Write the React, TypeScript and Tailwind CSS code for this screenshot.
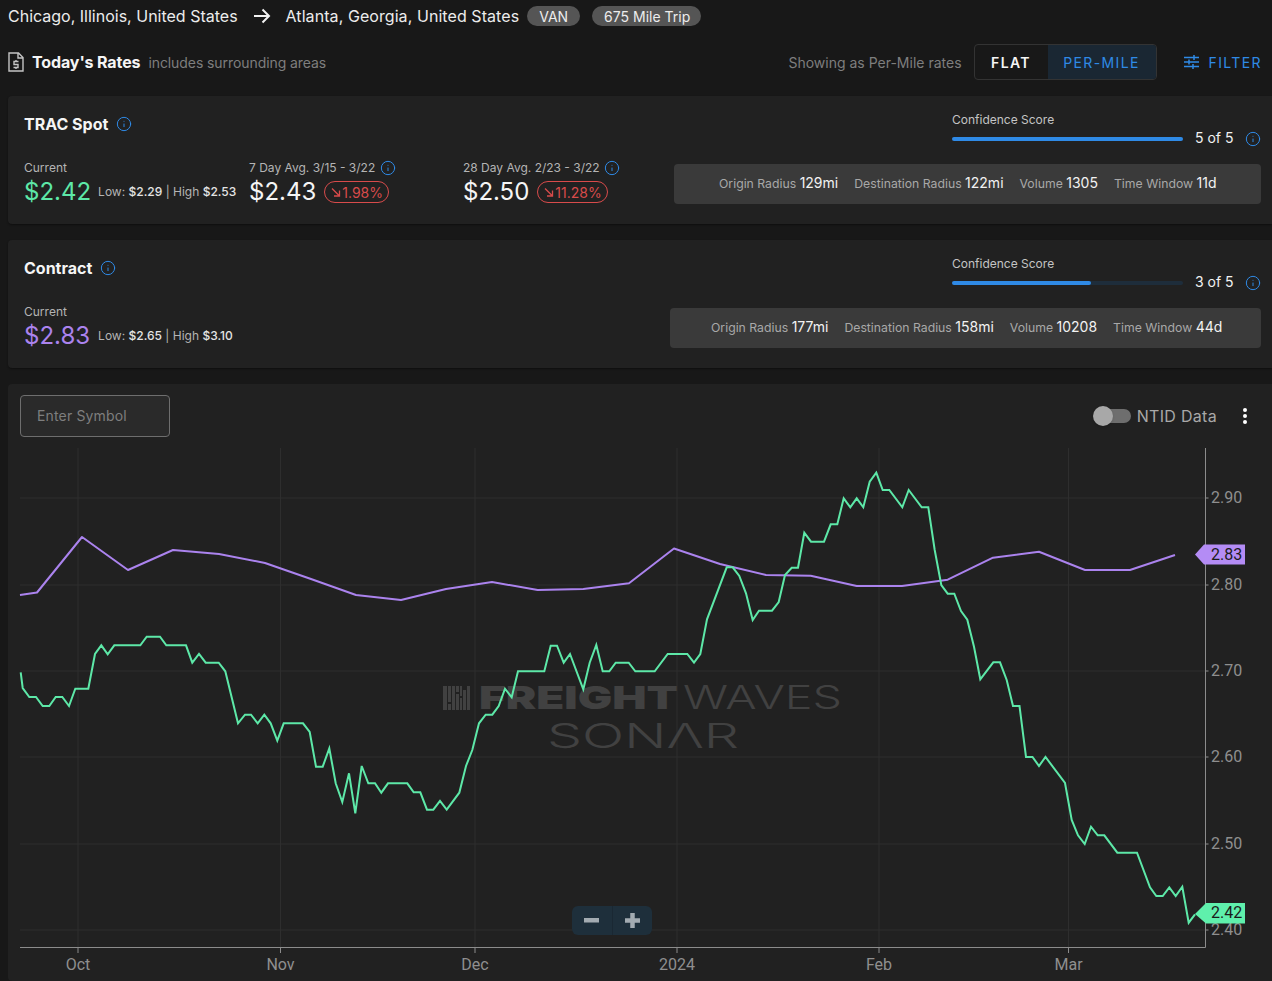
import { Info } from "lucide-react";

const green =
  "20.7,672.3 22.7,688 29.3,697 36,697 42.7,706 49.3,706 55.7,697 62.3,697 69,706 75.3,688.7 88.3,688.7 95,654 101.3,645.3 107.7,654.3 114.3,645.3 140.3,645.3 146.7,636.7 160,636.7 166.3,645.3 186,645.3 192.3,662.7 199,654 205.7,662.7 218.7,662.7 225.3,671.3 238,723.3 245,714.7 251,714.7 257.7,723.3 264.3,714.7 270.7,723.3 277.3,740.7 283.7,723.3 303,723.3 309.7,732 316,766.7 322.7,766.7 329.3,748.3 335.7,783.3 342.3,802 349,773.3 355.3,813.3 361.7,766 368.3,783.3 375,783.3 381.3,792.7 388,783.3 407.3,783.3 413.7,792.3 420.3,792.3 427,809.7 433.3,809.7 440,801 446.7,809.7 459.3,792.7 466,766 472.3,750 479,723.3 485.7,714.7 492.3,714.7 498.7,706 505,688.7 511.7,697.3 518,671.3 544.3,671.3 550.7,645.7 557,645.7 563.7,662.7 570,654 583.3,689.3 589.7,662.7 596.3,645 602.7,671.3 609.3,671.3 615.7,662.7 628.7,662.7 635.3,671.3 654.7,671.3 667.7,654 687.3,654 694,662.7 700.3,654 707,619.3 726.7,567.3 732.7,567.3 739.3,576 746,593.3 752.7,620 759,610.7 772,610.7 778.7,602 785,575 791.7,567.7 798,567.7 804.3,532.7 811,541.7 824,541.7 830.7,524.3 837.3,524.3 843.7,498.3 850.3,507.3 856.7,498.3 863.3,507.3 869.7,481.7 876.3,472.7 882.7,490 889.3,490 902.3,507.3 908.7,490 921.7,507.3 928.3,507.3 934.7,550 941.3,585 947.7,593.7 954.3,593.7 961,611 967.3,619.7 974,646.7 980.3,679.3 993.3,662.3 1000,662.3 1006.7,680 1013,706 1019.5,706 1026,757 1032.5,757 1039,766 1045.5,757 1065,783 1071.7,820 1078,835.3 1084.7,844 1091,826.7 1097.7,835.3 1104.3,835.3 1117.3,852.7 1137,852.7 1150,887.3 1156.3,896 1162.7,896 1169.3,887.3 1175.7,896 1182.3,886.7 1188.7,922.7 1195,914.3";

const purple =
  "20,595 37,592.5 82,537 128,570 173,550 219,554 265,563 311,579 356,595 401,600 446,589 492,582 537.7,590 583.3,589 629,583.3 674,548.5 720,564 766,575 810.7,575.7 856.7,586 902,586 947.7,579.7 993,557.7 1039,551.7 1085,570 1130,570 1175,555";

const yTicks = [
  { label: "2.90", y: 498 },
  { label: "2.80", y: 585 },
  { label: "2.70", y: 671 },
  { label: "2.60", y: 757 },
  { label: "2.50", y: 844 },
  { label: "2.40", y: 930 },
];

const xTicks = [
  { label: "Oct", x: 78 },
  { label: "Nov", x: 280.5 },
  { label: "Dec", x: 475 },
  { label: "2024", x: 677 },
  { label: "Feb", x: 879 },
  { label: "Mar", x: 1068.5 },
];

function InfoIcon() {
  return <Info size={16} strokeWidth={1.5} className="shrink-0 text-[#2f8ae6]" />;
}

function Stat({ label, value }: { label: string; value: string }) {
  return (
    <span className="whitespace-nowrap text-[12.25px] text-[#a8a8a8]">
      {label} <span className="text-[14px] text-[#f2f2f2]">{value}</span>
    </span>
  );
}

function Delta({ value }: { value: string }) {
  return (
    <span className="ml-2 flex h-[22px] items-center rounded-full border border-[#d84b4b] px-[5px] text-[14px] text-[#d84b4b]">
      <svg width="12" height="12" viewBox="0 0 12 12" fill="none" stroke="#d84b4b" strokeWidth="1.3">
        <path d="M2 2.5 9.5 10M4 10h5.5V4.5" />
      </svg>
      {value}
    </span>
  );
}

function Confidence({ score, percent }: { score: string; percent: string }) {
  return (
    <div className="w-[309px]">
      <div className="text-[12px] leading-[16px] text-[#c4c4c4]">Confidence Score</div>
      <div className="flex items-center">
        <div className="h-1 w-[231px] rounded-full bg-[#1e2d3b]">
          <div className={`h-1 rounded-full bg-[#2f8ae6] ${percent}`} />
        </div>
        <span className="ml-3 w-[50px] pb-[2px] text-[14px] leading-[19px] text-[#f2f2f2]">{score}</span>
        <InfoIcon />
      </div>
    </div>
  );
}

function Chart() {
  return (
    <svg width="1264" height="597" viewBox="8 384 1264 597" className="block" fontFamily="Roboto, sans-serif">
      {xTicks.map((t) => (
        <g key={t.label}>
          <line x1={t.x} x2={t.x} y1="448" y2="947" stroke="#2e2e2e" />
          <line x1={t.x} x2={t.x} y1="947" y2="953" stroke="#8c8c8c" />
          <text x={t.x} y="970" textAnchor="middle" fontSize="16" fill="#8f8f8f">
            {t.label}
          </text>
        </g>
      ))}
      {yTicks.map((t) => (
        <g key={t.label}>
          <line x1="20" x2="1205" y1={t.y} y2={t.y} stroke="#2e2e2e" />
          <line x1="1205" x2="1208.5" y1={t.y} y2={t.y} stroke="#8c8c8c" />
          <text x="1211" y={t.y + 4.5} fontSize="16" fill="#8f8f8f">
            {t.label}
          </text>
        </g>
      ))}
      <path d="M1205.5 448V947.5H20" fill="none" stroke="#8c8c8c" />

      <g fill="#414141">
        <rect x="443" y="686" width="4" height="24" />
        <rect x="448" y="686" width="3" height="16" />
        <rect x="448" y="704" width="3" height="6" />
        <rect x="452" y="686" width="3" height="24" />
        <rect x="456" y="686" width="3" height="6" />
        <rect x="456" y="694" width="3" height="16" />
        <rect x="460" y="686" width="2" height="10" />
        <rect x="460" y="698" width="2" height="12" />
        <rect x="463" y="690" width="3" height="20" />
        <rect x="467" y="686" width="3" height="24" />
        <text
          x="479"
          y="709"
          fontFamily="Inter, sans-serif"
          fontWeight="900"
          fontSize="32"
          textLength="199"
          lengthAdjust="spacingAndGlyphs"
        >
          FREIGHT
        </text>
        <text
          x="683"
          y="709"
          fontFamily="Inter, sans-serif"
          fontWeight="300"
          fontSize="32"
          textLength="159"
          lengthAdjust="spacingAndGlyphs"
        >
          WAVES
        </text>
        <text
          x="547"
          y="748"
          fontFamily="Inter, sans-serif"
          fontWeight="300"
          fontSize="34"
          textLength="192"
          lengthAdjust="spacingAndGlyphs"
        >
          SONΛR
        </text>
      </g>

      <polyline points={purple} fill="none" stroke="#ab83ee" strokeWidth="2" strokeLinejoin="round" />
      <polyline points={green} fill="none" stroke="#5de8a8" strokeWidth="2" />

      <path d="M1195 554.5 1204 544.5H1245V564.5H1204Z" fill="#b48cf5" />
      <text x="1211" y="560" fontSize="16" fill="#1b1b1b">
        2.83
      </text>
      <path d="M1195 914 1206 903H1245V923.5H1206Z" fill="#5ff0ac" />
      <text x="1211" y="918" fontSize="16" fill="#1b1b1b">
        2.42
      </text>
    </svg>
  );
}

export default function App() {
  return (
    <div className="h-[981px] overflow-hidden bg-[#181818] font-['Inter',sans-serif] text-white">
      <div className="flex h-8 items-center pl-2 text-[16px] text-[#ececec]">
        <span>Chicago, Illinois, United States</span>
        <svg width="20" height="20" viewBox="0 0 20 20" fill="none" stroke="#f2f2f2" strokeWidth="2" className="mx-[14px]">
          <path d="M2 10h15M10.5 3.5 17 10l-6.5 6.5" />
        </svg>
        <span className="tracking-[0.07px]">Atlanta, Georgia, United States</span>
        <span className="ml-2 flex h-5 items-center rounded-full bg-[#555555] px-3 text-[14px]">VAN</span>
        <span className="ml-3 flex h-5 items-center rounded-full bg-[#555555] pl-3 pr-[11px] text-[14px]">675 Mile Trip</span>
      </div>

      <div className="flex h-[64px] items-center justify-between pb-1 pl-2 pr-[10px]">
        <div className="flex items-center">
          <svg width="16" height="20" viewBox="0 0 16 20" fill="none" stroke="#c4c4c4" strokeWidth="1.4">
            <path d="M1 1h9.5L15 5.5V19H1zM10 1v5h5" />
            <path d="M10.5 9.5H6v3h4v3H5.500M8 8v1.500M8 15.500V17" />
          </svg>
          <span className="ml-2 text-[16px] font-bold tracking-[-0.12px] text-[#f5f5f5]">Today's Rates</span>
          <span className="ml-2 text-[14px] tracking-[-0.08px] text-[#7e7e7e]">includes surrounding areas</span>
        </div>
        <div className="flex items-center">
          <span className="text-[14px] text-[#7e7e7e]">Showing as Per-Mile rates</span>
          <div className="ml-3 flex h-9 w-[183px] overflow-hidden rounded border border-[#333333] text-[14px] font-semibold tracking-[1.4px]">
            <span className="flex w-[73px] items-center justify-center text-[#f5f5f5]">FLAT</span>
            <span className="flex flex-1 items-center justify-center bg-[#1a2733] font-normal text-[#2f8ae6]">PER-MILE</span>
          </div>
          <svg width="15" height="14" viewBox="0 0 15 14" fill="none" stroke="#2f8ae6" strokeWidth="1.5" className="ml-[27px]">
            <path d="M0 2.500h15M10 0v5M0 7h15M5 4.500v5M0 11.500h15M9 9v5" />
          </svg>
          <span className="ml-[10px] text-[14px] tracking-[1.4px] text-[#2f8ae6]">FILTER</span>
        </div>
      </div>

      <section className="ml-2 flex h-[128px] justify-between rounded-l bg-[#212121] pl-4 pr-[11px] shadow-[0_1px_2px_rgba(0,0,0,0.4)]">
        <div>
          <div className="mt-4 flex items-center gap-2">
            <h2 className="text-[16px] font-bold text-[#f5f5f5]">TRAC Spot</h2>
            <InfoIcon />
          </div>
          <div className="mt-6 flex">
            <div className="w-[225px]">
              <div className="text-[12px] leading-[16px] text-[#b4b4b4]">Current</div>
              <div className="flex items-center">
                <span className="text-[24px] leading-[32px] text-[#5de8a8]">$2.42</span>
                <span className="ml-[7px] whitespace-nowrap text-[12px] text-[#b4b4b4]">
                  Low: <span className="font-medium text-[#e4e4e4]">$2.29</span> | High{" "}
                  <span className="font-medium text-[#e4e4e4]">$2.53</span>
                </span>
              </div>
            </div>
            <div className="w-[214px]">
              <div className="flex items-center gap-[5px] text-[12px] leading-[16px] text-[#b4b4b4]">
                7 Day Avg. 3/15 - 3/22 <InfoIcon />
              </div>
              <div className="flex items-center">
                <span className="text-[24px] leading-[32px] text-[#f5f5f5]">$2.43</span>
                <Delta value="1.98%" />
              </div>
            </div>
            <div>
              <div className="flex items-center gap-1 text-[12px] leading-[16px] text-[#b4b4b4]">
                28 Day Avg. 2/23 - 3/22 <InfoIcon />
              </div>
              <div className="flex items-center">
                <span className="text-[24px] leading-[32px] text-[#f5f5f5]">$2.50</span>
                <Delta value="11.28%" />
              </div>
            </div>
          </div>
        </div>
        <div className="flex flex-col items-end">
          <div className="mt-4">
            <Confidence score="5 of 5" percent="w-full" />
          </div>
          <div className="mt-[15px] flex h-10 w-[587px] items-center gap-4 rounded bg-[#3a3a3a] pb-[2px] pl-[45px]">
            <Stat label="Origin Radius" value="129mi" />
            <Stat label="Destination Radius" value="122mi" />
            <Stat label="Volume" value="1305" />
            <Stat label="Time Window" value="11d" />
          </div>
        </div>
      </section>

      <section className="ml-2 mt-4 flex h-[128px] justify-between rounded-l bg-[#212121] pl-4 pr-[11px] shadow-[0_1px_2px_rgba(0,0,0,0.4)]">
        <div>
          <div className="mt-4 flex items-center gap-2">
            <h2 className="text-[16px] font-bold text-[#f5f5f5]">Contract</h2>
            <InfoIcon />
          </div>
          <div className="mt-6 text-[12px] leading-[16px] text-[#b4b4b4]">Current</div>
          <div className="flex items-center">
            <span className="text-[24px] leading-[32px] text-[#ab83ee]">$2.83</span>
            <span className="ml-2 whitespace-nowrap text-[12px] text-[#b4b4b4]">
              Low: <span className="font-medium text-[#e4e4e4]">$2.65</span> | High{" "}
              <span className="font-medium text-[#e4e4e4]">$3.10</span>
            </span>
          </div>
        </div>
        <div className="flex flex-col items-end">
          <div className="mt-4">
            <Confidence score="3 of 5" percent="w-[60%]" />
          </div>
          <div className="mt-[15px] flex h-10 w-[591px] items-center gap-4 rounded bg-[#3a3a3a] pb-[2px] pl-[41px]">
            <Stat label="Origin Radius" value="177mi" />
            <Stat label="Destination Radius" value="158mi" />
            <Stat label="Volume" value="10208" />
            <Stat label="Time Window" value="44d" />
          </div>
        </div>
      </section>

      <section className="relative ml-2 mt-4 h-[597px] rounded-l bg-[#212121]">
        <div className="absolute left-3 right-0 top-[11px] z-10 flex items-center justify-between pr-[25px]">
          <div className="flex h-[42px] w-[150px] items-center rounded border border-[#6e6e6e] bg-[#2a2a2a] pb-[2px] pl-4 text-[14px] tracking-[0.15px] text-[#7e7e7e]">
            Enter Symbol
          </div>
          <div className="flex items-center">
            <div className="relative h-[14px] w-[34px] rounded-full bg-[#6e6e6e]">
              <div className="absolute -left-1 -top-[3px] h-5 w-5 rounded-full bg-[#a8a8a8] shadow" />
            </div>
            <span className="ml-[6px] text-[16px] tracking-[0.3px] text-[#a8a8a8]">NTID Data</span>
            <div className="ml-[26px] flex flex-col gap-[2px]">
              <span className="h-1 w-1 rounded-full bg-white" />
              <span className="h-1 w-1 rounded-full bg-white" />
              <span className="h-1 w-1 rounded-full bg-white" />
            </div>
          </div>
        </div>
        <Chart />
        <div className="absolute left-[564px] top-[522px] flex h-[29px] w-20 rounded-md bg-[#1e2f3b] text-[#a3abb1]">
          <span className="flex flex-1 items-center justify-center border-r border-[#1a2833]">
            <svg width="15" height="15" viewBox="0 0 15 15" fill="currentColor">
              <rect x="0" y="5" width="15" height="4.5" />
            </svg>
          </span>
          <span className="flex flex-1 items-center justify-center">
            <svg width="15" height="15" viewBox="0 0 15 15" fill="currentColor">
              <path d="M0 5.25h5.25V0h4.500v5.250H15v4.500H9.750V15h-4.500V9.750H0z" />
            </svg>
          </span>
        </div>
      </section>
    </div>
  );
}
